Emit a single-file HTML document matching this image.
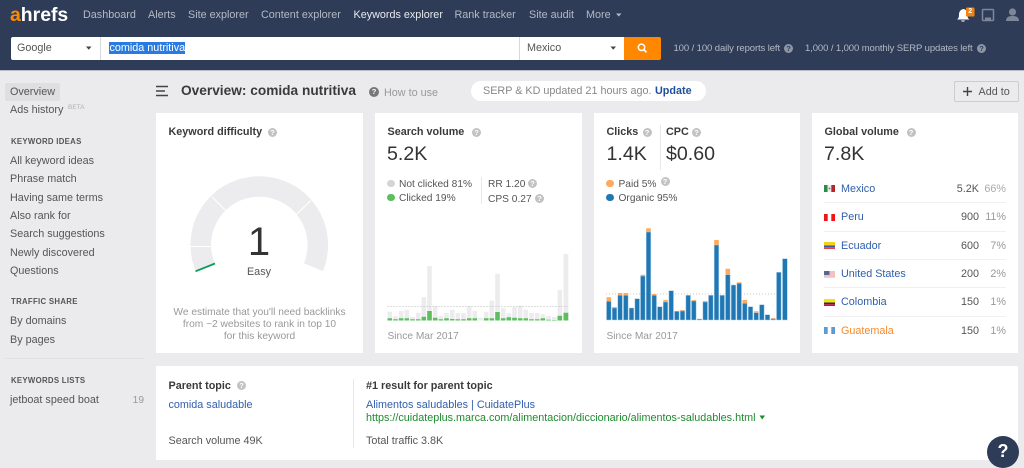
<!DOCTYPE html>
<html><head><meta charset="utf-8"><title>Ahrefs Keywords Explorer</title>
<style>
html,body{margin:0;padding:0}
body{width:1024px;height:462px;overflow:hidden;background:#ebebee;position:relative;font-family:"Liberation Sans",Arial,sans-serif;font-size:10.8px;color:#555}
.t{position:absolute;white-space:nowrap;line-height:14px;height:14px}
.b{position:absolute}
.card{position:absolute;background:#fff}
.n{color:#b4b9c4}
.h{font-weight:bold;color:#3a3a3a}
.big{font-size:19.6px;line-height:24px;height:24px;color:#333}
.s{font-weight:bold;font-size:7.8px;letter-spacing:.3px;color:#555}
.g{color:#999}
.sm{font-size:10.2px}
.l{color:#2f5fae}
.q{position:absolute;width:9px;height:9px;border-radius:50%;background:#c2c2c2;color:#fff;font-size:7.5px;font-weight:bold;line-height:9px;text-align:center}
.dot{position:absolute;width:7.5px;height:7.5px;border-radius:50%}
.r{text-align:right}
.sep{position:absolute;left:824px;width:182px;height:1px;background:#f0f0f2}
.fl{position:absolute;left:824px;width:11px;height:7px}
</style></head><body>

<div class="b" style="left:0;top:0;width:1024px;height:70px;background:#2e3c57;border-bottom:1px solid #b9bdc6"></div>
<div class="t" style="left:10px;top:3px;height:24px;line-height:24px;font-size:19.4px;font-weight:bold;color:#fff"><span style="color:#ff8a00">a</span>hrefs</div>
<div class="t n" style="left:83px;top:8px">Dashboard</div>
<div class="t n" style="left:148px;top:8px">Alerts</div>
<div class="t n" style="left:188px;top:8px">Site explorer</div>
<div class="t n" style="left:261px;top:8px">Content explorer</div>
<div class="t" style="left:353.5px;top:8px;color:#e8eaee">Keywords explorer</div>
<div class="t n" style="left:454.5px;top:8px">Rank tracker</div>
<div class="t n" style="left:529px;top:8px">Site audit</div>
<div class="t n" style="left:586px;top:8px">More</div>
<svg class="b" style="left:0;top:0" width="1024" height="70" viewBox="0 0 1024 70">
<path d="M616 13.500h5.500l-2.750 3z" fill="#b4b9c4"/>
<path d="M957 19.500c1.500-1 2-2 2-5 0-3 1.700-5 4-5.400s4.500 2.400 4.500 5.400c0 3 .5 4 2 5z M961 20.500h4c-.3 1.500-3.700 1.500-4 0z" fill="#fff"/>
<rect x="966" y="7.500" width="8.500" height="9" rx="1" fill="#f5820d"/>
<rect x="982.500" y="9.500" width="11" height="11" rx="1" fill="none" stroke="#7d8799" stroke-width="1.500"/>
<path d="M985 17.500h6v3h-6z" fill="#7d8799"/>
<circle cx="1012.500" cy="12" r="3.600" fill="#7d8799"/>
<path d="M1006 21c0-4 3-5 6.500-5s6.500 1 6.500 5z" fill="#7d8799"/>
</svg>
<div class="t" style="left:966px;top:5px;width:8.500px;text-align:center;font-size:7px;font-weight:bold;color:#fff">2</div>

<div class="b" style="left:10.500px;top:37px;width:614px;height:22.500px;background:#fff;border-radius:2px 0 0 2px"></div>
<div class="b" style="left:100px;top:37px;width:1px;height:22.500px;background:#d8d8d8"></div>
<div class="b" style="left:519px;top:37px;width:1px;height:22.500px;background:#d8d8d8"></div>
<div class="b" style="left:624px;top:37px;width:36.500px;height:22.500px;background:#ff8800;border-radius:0 2px 2px 0"></div>
<div class="t" style="left:17px;top:41px;color:#555">Google</div>
<div class="b" style="left:109px;top:42px;width:76px;height:12px;background:#2a7be0"></div>
<div class="t" style="left:109.500px;top:41px;color:#fff">comida nutritiva</div>
<div class="t" style="left:527px;top:41px;color:#555">Mexico</div>
<svg class="b" style="left:0;top:37px" width="1024" height="23" viewBox="0 37 1024 23">
<path d="M86 46.500h5.500l-2.750 3.200z" fill="#444"/>
<path d="M610.500 46.500h5.500l-2.750 3.200z" fill="#444"/>
<circle cx="641.500" cy="47.300" r="3.200" fill="none" stroke="#fff" stroke-width="1.500"/>
<path d="M643.800 49.600l2.700 2.700" stroke="#fff" stroke-width="1.700"/>
</svg>
<div class="t n" style="left:673.500px;top:42px;font-size:9.500px;letter-spacing:-.1px">100 / 100 daily reports left</div>
<div class="q" style="left:784px;top:43.500px;background:#8e96a6;color:#2e3c57">?</div>
<div class="t n" style="left:805px;top:42px;font-size:9.500px;letter-spacing:-.1px">1,000 / 1,000 monthly SERP updates left</div>
<div class="q" style="left:977px;top:43.500px;background:#8e96a6;color:#2e3c57">?</div>

<div class="b" style="left:5px;top:83px;width:55px;height:18px;background:#dfdfe2;border-radius:2px"></div>
<div class="t" style="left:10px;top:85px">Overview</div>
<div class="t" style="left:10px;top:103px">Ads history</div>
<div class="t" style="left:68px;top:100.500px;font-size:6.500px;color:#b0b0b0">BETA</div>
<div class="t s" style="left:11px;top:134.500px">KEYWORD IDEAS</div>
<div class="t" style="left:10px;top:153.700px">All keyword ideas</div>
<div class="t" style="left:10px;top:172px">Phrase match</div>
<div class="t" style="left:10px;top:190.500px">Having same terms</div>
<div class="t" style="left:10px;top:208.500px">Also rank for</div>
<div class="t" style="left:10px;top:227px">Search suggestions</div>
<div class="t" style="left:10px;top:245.500px">Newly discovered</div>
<div class="t" style="left:10px;top:263.700px">Questions</div>
<div class="t s" style="left:11px;top:295px">TRAFFIC SHARE</div>
<div class="t" style="left:10px;top:314px">By domains</div>
<div class="t" style="left:10px;top:333px">By pages</div>
<div class="b" style="left:5px;top:358px;width:139px;height:1px;background:#e1e1e4"></div>
<div class="t s" style="left:11px;top:374px">KEYWORDS LISTS</div>
<div class="t" style="left:10px;top:393px">jetboat speed boat</div>
<div class="t g r sm" style="left:120px;width:24px;top:393.500px">19</div>

<svg class="b" style="left:155px;top:85px" width="15" height="13"><path d="M1 1.500h12M1 6h9M1 10.500h12" stroke="#444" stroke-width="1.500"/></svg>
<div class="t" style="left:181px;top:84px;font-size:13.700px;font-weight:bold;color:#3a3a3a">Overview: comida nutritiva</div>
<div class="q" style="left:369px;top:87px;width:10px;height:10px;line-height:10px;background:#777">?</div>
<div class="t g" style="left:384px;top:85.500px">How to use</div>
<div class="b" style="left:471px;top:81px;width:235px;height:20px;background:#fff;border-radius:10px"></div>
<div class="t" style="left:483px;top:84px;color:#888">SERP &amp; KD updated 21 hours ago.</div>
<div class="t" style="left:655px;top:84px;font-weight:bold;color:#1f4f9c">Update</div>
<div class="b" style="left:954px;top:81px;width:63px;height:18.500px;border:1px solid #ccc;border-radius:2px"></div>
<svg class="b" style="left:961px;top:85px" width="13" height="13"><path d="M6.500 2v9M2 6.500h9" stroke="#444" stroke-width="1.400"/></svg>
<div class="t" style="left:978.500px;top:84.500px;color:#555">Add to</div>

<div class="card" style="left:156px;top:113px;width:207px;height:240px"></div>
<div class="t h" style="left:168.500px;top:125px">Keyword difficulty</div>
<div class="q" style="left:268px;top:128px">?</div>
<svg class="b" style="left:156px;top:113px" width="207" height="240" viewBox="156 113 207 240">
<path d="M205.200 267.200A58.500 58.500 0 1 1 313.400 267.200" fill="none" stroke="#ececee" stroke-width="20.500"/>
<path d="M190 246.500h21M212 196.700l14 14.300M310.700 200.700l-14 13.300" stroke="#fff" stroke-width="1.100"/>
<path d="M195.500 271.300l19.500-7.800" stroke="#0b9e5a" stroke-width="1.800"/>
</svg>
<div class="t" style="left:229px;width:60px;top:220px;height:44px;line-height:44px;font-size:40px;text-align:center;color:#333">1</div>
<div class="t" style="left:229px;width:60px;top:265px;text-align:center;color:#555">Easy</div>
<div class="t g sm" style="left:156px;width:207px;top:305.500px;text-align:center">We estimate that you'll need backlinks</div>
<div class="t g sm" style="left:156px;width:207px;top:317.900px;text-align:center">from ~2 websites to rank in top 10</div>
<div class="t g sm" style="left:156px;width:207px;top:330.300px;text-align:center">for this keyword</div>

<div class="card" style="left:375px;top:113px;width:206.500px;height:240px"></div>
<div class="t h" style="left:387.500px;top:125px">Search volume</div>
<div class="q" style="left:472px;top:128px">?</div>
<div class="t big" style="left:387px;top:142px">5.2K</div>
<div class="dot" style="left:387px;top:179.500px;background:#d5d5d5"></div>
<div class="t sm" style="left:399px;top:177.500px">Not clicked 81%</div>
<div class="dot" style="left:387px;top:193.500px;background:#5cbf5f"></div>
<div class="t sm" style="left:399px;top:191.500px">Clicked 19%</div>
<div class="b" style="left:481px;top:177px;width:1px;height:27px;background:#e8e8e8"></div>
<div class="t sm" style="left:488px;top:177.500px">RR 1.20</div>
<div class="q" style="left:528px;top:178.500px">?</div>
<div class="t sm" style="left:488px;top:192.500px">CPS 0.27</div>
<div class="q" style="left:535px;top:193.500px">?</div>
<svg class="b" style="left:375px;top:240px" width="207" height="90" viewBox="375 240 207 90">
<path fill="#ececee" d="M387.500 311.700h4.600V320.500h-4.600zM393.200 316.300h4.600V320.500h-4.600zM398.800 311h4.600V320.500h-4.600zM404.500 309.700h4.600V320.500h-4.600zM410.200 317h4.600V320.500h-4.600zM415.900 312.700h4.600V320.500h-4.600zM421.500 297.300h4.600V320.500h-4.600zM427.200 266h4.600V320.500h-4.600zM432.900 306.300h4.600V320.500h-4.600zM438.500 316h4.600V320.500h-4.600zM444.200 313h4.600V320.500h-4.600zM449.900 309.700h4.600V320.500h-4.600zM455.500 313h4.600V320.500h-4.600zM461.200 313h4.600V320.500h-4.600zM466.900 306.300h4.600V320.500h-4.600zM472.500 311h4.600V320.500h-4.600zM478.200 317.700h4.600V320.500h-4.600zM483.900 312h4.600V320.500h-4.600zM489.500 300.700h4.600V320.500h-4.600zM495.200 273.700h4.600V320.500h-4.600zM500.900 308.300h4.600V320.500h-4.600zM506.500 313.300h4.600V320.500h-4.600zM512.200 307h4.600V320.500h-4.600zM517.900 305.700h4.600V320.500h-4.600zM523.500 309.700h4.600V320.500h-4.600zM529.200 313h4.600V320.500h-4.600zM534.900 313h4.600V320.500h-4.600zM540.500 314.300h4.600V320.500h-4.600zM546.200 316h4.600V320.500h-4.600zM551.900 317h4.600V320.500h-4.600zM557.500 290h4.600V320.500h-4.600zM563.500 254h4.800V320.500h-4.800z"/>
<path d="M387.500 306.500H568" stroke="#aaa" stroke-width=".8" stroke-dasharray="1 2"/>
<path fill="#5cbf5f" d="M387.500 318.300h4.600V320.500h-4.600zM393.200 319.300h4.600V320.500h-4.600zM398.800 318.300h4.600V320.500h-4.600zM404.500 318.300h4.600V320.500h-4.600zM410.200 319.300h4.600V320.500h-4.600zM415.900 319.300h4.600V320.500h-4.600zM421.500 316.700h4.600V320.500h-4.600zM427.200 311h4.600V320.500h-4.600zM432.900 317.700h4.600V320.500h-4.600zM438.500 319.300h4.600V320.500h-4.600zM444.200 318.300h4.600V320.500h-4.600zM449.900 319h4.600V320.500h-4.600zM455.500 319.300h4.600V320.500h-4.600zM461.200 319.300h4.600V320.500h-4.600zM466.900 318.300h4.600V320.500h-4.600zM472.500 318.300h4.600V320.500h-4.600zM483.900 318.300h4.600V320.500h-4.600zM489.500 318.300h4.600V320.500h-4.600zM495.200 312h4.600V320.500h-4.600zM500.900 318.300h4.600V320.500h-4.600zM506.500 317.300h4.600V320.500h-4.600zM512.200 317.700h4.600V320.500h-4.600zM517.900 318.300h4.600V320.500h-4.600zM523.500 318.300h4.600V320.500h-4.600zM529.200 319.300h4.600V320.500h-4.600zM534.900 319.300h4.600V320.500h-4.600zM540.500 318.300h4.600V320.500h-4.600zM546.200 319.700h4.600V320.500h-4.600zM551.900 320h4.600V320.500h-4.600zM557.500 315.700h4.600V320.500h-4.600zM563.500 312.700h4.800V320.500h-4.800z"/>
</svg>
<div class="t g sm" style="left:387.500px;top:329.500px">Since Mar 2017</div>

<div class="card" style="left:594px;top:113px;width:206px;height:240px"></div>
<div class="t h" style="left:606.500px;top:125px">Clicks</div>
<div class="q" style="left:642.500px;top:128px">?</div>
<div class="b" style="left:659.500px;top:125px;width:1px;height:45px;background:#e8e8e8"></div>
<div class="t h" style="left:666px;top:125px">CPC</div>
<div class="q" style="left:692px;top:128px">?</div>
<div class="t big" style="left:606.500px;top:142px">1.4K</div>
<div class="t big" style="left:666px;top:142px">$0.60</div>
<div class="dot" style="left:606px;top:179.500px;background:#ffa95c"></div>
<div class="t sm" style="left:618.500px;top:177.500px">Paid 5%</div>
<div class="q" style="left:660.500px;top:177px">?</div>
<div class="dot" style="left:606px;top:193.500px;background:#1f77b4"></div>
<div class="t sm" style="left:618.500px;top:191.500px">Organic 95%</div>
<svg class="b" style="left:594px;top:220px" width="206" height="105" viewBox="594 220 206 105">
<path d="M606 294H788" stroke="#bbb" stroke-width=".8" stroke-dasharray="1 2"/>
<path fill="#ffa95c" d="M606.500 297.300h4.600v5h-4.600zM612.200 307h4.600v2h-4.600zM617.800 293h4.600v3h-4.600zM623.500 293h4.600v3h-4.600zM640.500 274.700h4.600v2h-4.600zM646.200 228.300h4.600v4.500h-4.600zM651.900 294h4.600v2h-4.600zM663.200 300h4.600v3h-4.600zM680.200 310h4.600v2h-4.600zM691.500 300h4.600v2h-4.600zM702.900 301h4.600v2h-4.600zM714.200 240h4.600v6h-4.600zM725.500 268.700h4.600v7h-4.600zM736.900 282.300h4.600v2h-4.600zM742.500 300h4.600v4h-4.600zM753.900 311.300h4.600v2h-4.600zM770.900 318h4.600v2h-4.600z"/>
<path fill="#1f77b4" stroke="#a8cde6" stroke-width=".5" d="M606.500 301.300h4.600V320h-4.600zM612.200 308h4.600V320h-4.600zM617.800 295.300h4.600V320h-4.600zM623.500 295.300h4.600V320h-4.600zM629.200 308h4.600V320h-4.600zM634.900 298.700h4.600V320h-4.600zM640.500 276h4.600V320h-4.600zM646.200 232h4.600V320h-4.600zM651.900 295.300h4.600V320h-4.600zM657.500 306.700h4.600V320h-4.600zM663.200 302h4.600V320h-4.600zM668.900 290.700h4.600V320h-4.600zM674.500 311.300h4.600V320h-4.600zM680.200 311h4.600V320h-4.600zM685.900 295.300h4.600V320h-4.600zM691.500 301h4.600V320h-4.600zM697.200 319h4.600V320h-4.600zM702.900 302h4.600V320h-4.600zM708.500 295.300h4.600V320h-4.600zM714.200 245h4.600V320h-4.600zM719.900 295.300h4.600V320h-4.600zM725.500 274.700h4.600V320h-4.600zM731.200 285h4.600V320h-4.600zM736.900 283.300h4.600V320h-4.600zM742.500 303.300h4.600V320h-4.600zM748.200 306.700h4.600V320h-4.600zM753.900 312.700h4.600V320h-4.600zM759.500 304.700h4.600V320h-4.600zM765.200 314.700h4.600V320h-4.600zM770.900 319h4.600V320h-4.600zM776.500 272.300h4.600V320h-4.600zM782.500 258.700h4.800V320h-4.800z"/>
</svg>
<div class="t g sm" style="left:606.500px;top:329.500px">Since Mar 2017</div>

<div class="card" style="left:811.500px;top:113px;width:206.500px;height:240px"></div>
<div class="t h" style="left:824.500px;top:125px">Global volume</div>
<div class="q" style="left:906.500px;top:128px">?</div>
<div class="t big" style="left:824px;top:142px">7.8K</div>

<svg class="fl" style="top:185px" viewBox="0 0 11 7"><rect width="3.700" height="7" fill="#2c8a4c"/><rect x="3.700" width="3.600" height="7" fill="#eee"/><rect x="7.300" width="3.700" height="7" fill="#b3262c"/><circle cx="5.500" cy="3.500" r="1" fill="#7a8a55"/></svg>
<svg class="fl" style="top:213.500px" viewBox="0 0 11 7"><rect width="3.700" height="7" fill="#f01414"/><rect x="7.300" width="3.700" height="7" fill="#f01414"/></svg>
<svg class="fl" style="top:242px" viewBox="0 0 11 7"><rect width="11" height="3.500" fill="#f4d21c"/><rect y="3.500" width="11" height="1.800" fill="#3a57a8"/><rect y="5.300" width="11" height="1.700" fill="#e0454a"/></svg>
<svg class="fl" style="top:270.500px" viewBox="0 0 11 7"><rect width="11" height="7" fill="#f3d0d0"/><path d="M0 1h11M0 3h11M0 5h11" stroke="#f0a8a8" stroke-width=".8"/><rect width="5.500" height="4" fill="#5a6590"/></svg>
<svg class="fl" style="top:298.500px" viewBox="0 0 11 7"><rect width="11" height="3.500" fill="#fbe400"/><rect y="3.500" width="11" height="1.800" fill="#1c2a8a"/><rect y="5.300" width="11" height="1.700" fill="#d81030"/></svg>
<svg class="fl" style="top:327px" viewBox="0 0 11 7"><rect width="3.700" height="7" fill="#5b9bd5"/><rect x="7.300" width="3.700" height="7" fill="#5b9bd5"/></svg>

<div class="t l" style="left:841px;top:182px">Mexico</div>
<div class="t r" style="left:939px;width:40px;top:182px">5.2K</div>
<div class="t r" style="left:976px;width:30px;top:182px;color:#aaa">66%</div>
<div class="sep" style="top:202px"></div>
<div class="t l" style="left:841px;top:210px">Peru</div>
<div class="t r" style="left:939px;width:40px;top:210px">900</div>
<div class="t r g" style="left:976px;width:30px;top:210px">11%</div>
<div class="sep" style="top:231px"></div>
<div class="t l" style="left:841px;top:238.500px">Ecuador</div>
<div class="t r" style="left:939px;width:40px;top:238.500px">600</div>
<div class="t r g" style="left:976px;width:30px;top:238.500px">7%</div>
<div class="sep" style="top:259px"></div>
<div class="t l" style="left:841px;top:267px">United States</div>
<div class="t r" style="left:939px;width:40px;top:267px">200</div>
<div class="t r g" style="left:976px;width:30px;top:267px">2%</div>
<div class="sep" style="top:287px"></div>
<div class="t l" style="left:841px;top:295px">Colombia</div>
<div class="t r" style="left:939px;width:40px;top:295px">150</div>
<div class="t r g" style="left:976px;width:30px;top:295px">1%</div>
<div class="sep" style="top:316px"></div>
<div class="t" style="left:841px;top:323.500px;color:#f58a2c">Guatemala</div>
<div class="t r" style="left:939px;width:40px;top:323.500px">150</div>
<div class="t r g" style="left:976px;width:30px;top:323.500px">1%</div>

<div class="card" style="left:156px;top:366px;width:862px;height:94px"></div>
<div class="t h" style="left:168.500px;top:378.500px">Parent topic</div>
<div class="q" style="left:237px;top:381px">?</div>
<div class="t l" style="left:168.500px;top:398px">comida saludable</div>
<div class="t" style="left:168.500px;top:433.500px">Search volume 49K</div>
<div class="b" style="left:353px;top:379px;width:1px;height:69px;background:#e8e8e8"></div>
<div class="t h" style="left:366px;top:378.500px">#1 result for parent topic</div>
<div class="t l" style="left:366px;top:398px">Alimentos saludables | CuidatePlus</div>
<div class="t" style="left:366px;top:411px;color:#1f8a2e">https://cuidateplus.marca.com/alimentacion/diccionario/alimentos-saludables.html</div>
<svg class="b" style="left:759px;top:415px" width="7" height="6"><path d="M.5 .5h5.500l-2.750 4z" fill="#1f8a2e"/></svg>
<div class="t" style="left:366px;top:433.500px">Total traffic 3.8K</div>

<div class="b" style="left:987px;top:436px;width:32px;height:32px;border-radius:50%;background:#2e3c57;color:#fff;font-size:18px;font-weight:bold;line-height:30px;text-align:center">?</div>
</body></html>
